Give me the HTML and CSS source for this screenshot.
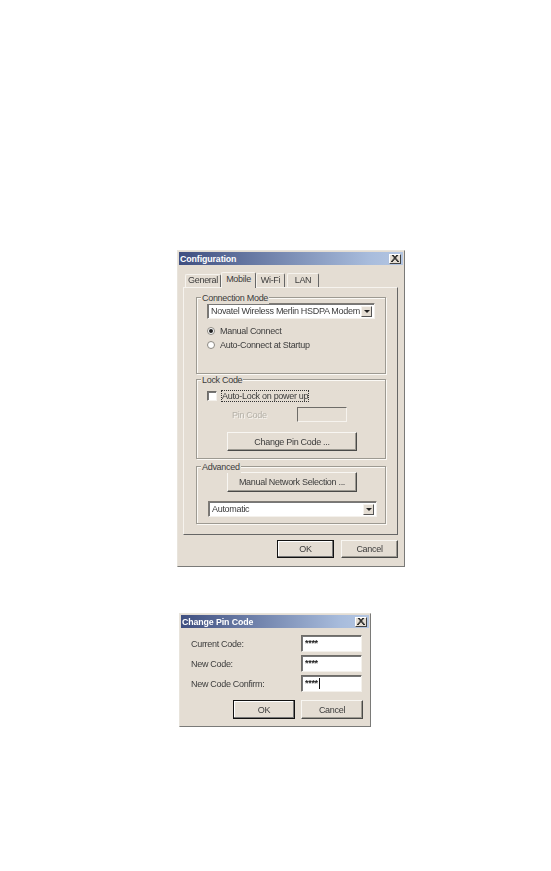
FILE: index.html
```html
<!DOCTYPE html>
<html lang="en">
<head>
<meta charset="utf-8">
<title>Configuration</title>
<link rel="stylesheet" href="styles.css">
</head>
<body>
<main class="page">
  <section class="window config">
    <header class="titlebar"><span>Configuration</span><span class="close"><svg width="8" height="7" viewBox="0 0 8 7"><path d="M1 0 L7 7 M2 0 L8 7 M7 0 L1 7 M6 0 L0 7" stroke="#222" stroke-width="1"/></svg></span></header>
    <nav class="tabs">
      <span class="tab tab-general">General</span>
      <span class="tab tab-active">Mobile</span>
      <span class="tab tab-wifi">Wi-Fi</span>
      <span class="tab tab-lan">LAN</span>
    </nav>
    <div class="panel">
      <div class="group group-conn">
        <span class="legend">Connection Mode</span>
        <div class="combo combo-modem"><span class="combo-text">Novatel Wireless Merlin HSDPA Modem</span><span class="combo-btn"><i></i></span></div>
        <div class="radio-row"><span class="radio on"></span><span>Manual Connect</span></div>
        <div class="radio-row"><span class="radio"></span><span>Auto-Connect at Startup</span></div>
      </div>
      <div class="group group-lock">
        <span class="legend">Lock Code</span>
        <div class="check-row"><span class="check"></span><span class="focus">Auto-Lock on power up</span></div>
        <div class="pin-row"><span class="disabled">Pin Code</span><span class="pin-input"></span></div>
        <div class="btn btn-wide btn-change">Change Pin Code ...</div>
      </div>
      <div class="group group-adv">
        <span class="legend">Advanced</span>
        <div class="btn btn-wide btn-network">Manual Network Selection ...</div>
        <div class="combo combo-auto"><span class="combo-text">Automatic</span><span class="combo-btn"><i></i></span></div>
      </div>
    </div>
    <footer class="actions actions-config">
      <div class="btn btn-default btn-ok">OK</div>
      <div class="btn btn-cancel">Cancel</div>
    </footer>
  </section>

  <section class="window pin">
    <header class="titlebar"><span>Change Pin Code</span><span class="close"><svg width="8" height="7" viewBox="0 0 8 7"><path d="M1 0 L7 7 M2 0 L8 7 M7 0 L1 7 M6 0 L0 7" stroke="#222" stroke-width="1"/></svg></span></header>
    <div class="fields">
      <div class="field"><span>Current Code:</span><span class="input">****</span></div>
      <div class="field"><span>New Code:</span><span class="input">****</span></div>
      <div class="field"><span>New Code Confirm:</span><span class="input">****<b class="caret"></b></span></div>
    </div>
    <footer class="actions actions-pin">
      <div class="btn btn-default btn-ok2">OK</div>
      <div class="btn btn-cancel2">Cancel</div>
    </footer>
  </section>
</main>
</body>
</html>
```
FILE: styles.css
```css
* { box-sizing: border-box; }
html, body { margin: 0; padding: 0; background: #fff; }
body { width: 551px; height: 871px; overflow: hidden; font-family: "Liberation Sans", Arial, sans-serif; font-size: 9px; letter-spacing: -0.3px; color: #3c3c3c; white-space: nowrap; }
.page { display: flex; flex-direction: column; filter: blur(0.4px); }

.window { background: #e4ddd3; border: 1px solid; border-color: #e8e4dc #7a7a78 #7a7a78 #e8e4dc; padding: 1px; }
.config { width: 228px; height: 317px; margin: 250px 0 0 177px; }
.pin { width: 192px; height: 114px; margin: 46px 0 0 179px; }

.titlebar { height: 13px; display: flex; align-items: center; justify-content: space-between; padding: 0 2px 0 1px; background: linear-gradient(90deg, #3f4f80, #a8bcdc 85%, #b4c6e2); color: #fff; font-weight: bold; font-size: 8.8px; letter-spacing: -0.1px; }
.close { width: 12px; height: 10px; background: #e4ddd3; border: 1px solid; border-color: #fff #444 #444 #fff; display: flex; align-items: center; justify-content: center; }

.tabs { display: flex; height: 17px; margin: 5px 0 0 5px; align-items: flex-end; }
.tab { border: 1px solid; border-color: #f6f3ee #666 #e4ddd3 #f6f3ee; border-bottom: 0; text-align: center; border-radius: 2px 2px 0 0; line-height: 11px; }
.tab-general { width: 36px; height: 13px; margin-left: 1px; }
.tab-active { width: 35px; height: 16px; background: #e4ddd3; margin-bottom: -1px; position: relative; z-index: 1; padding-top: 1px; }
.tab-wifi { width: 29px; height: 14px; padding-top: 1px; }
.tab-lan { width: 32px; height: 14px; margin-left: 2px; padding-top: 1px; }

.panel { width: 215px; height: 248px; margin-left: 4px; border: 1px solid; border-color: #f6f3ee #666 #666 #f6f3ee; padding: 9px 12px 0 12px; display: flex; flex-direction: column; }

.group { position: relative; border: 1px solid #9d9a92; box-shadow: 1px 1px 0 #fbf9f5, inset 1px 1px 0 #fbf9f5; width: 190px; padding: 0 0 0 10px; }
.legend { position: absolute; top: -5px; left: 4px; background: #e4ddd3; padding: 0 1px; line-height: 11px; }
.group-conn { height: 77px; padding-top: 5px; }
.group-lock { height: 80px; margin-top: 5px; padding-top: 10px; }
.group-adv { height: 58px; margin-top: 7px; padding-top: 5px; }

.combo { background: #fff; border: 1px solid; border-color: #7e7a74 #f4f1ec #f4f1ec #7e7a74; box-shadow: inset 1px 1px 0 #777; display: flex; align-items: center; justify-content: space-between; padding: 2px 2px 2px 3px; }
.combo-modem { width: 168px; height: 16px; margin-bottom: 5px; }
.combo-auto { width: 169px; height: 16px; margin: 9px 0 0 1px; }
.combo-btn { width: 11px; height: 11px; background: #e4ddd3; border: 1px solid; border-color: #f6f3ee #555 #555 #f6f3ee; display: flex; align-items: center; justify-content: center; }
.combo-btn i { width: 0; height: 0; border: 3px solid transparent; border-top: 3px solid #222; border-bottom: 0; }

.radio-row { display: flex; align-items: center; gap: 5px; height: 14px; }
.radio { width: 8px; height: 8px; border-radius: 50%; background: #fff; border: 1px solid #8a8780; display: flex; align-items: center; justify-content: center; }
.radio.on::after { content: ""; width: 4px; height: 4px; border-radius: 50%; background: #222; }

.check-row { display: flex; align-items: center; gap: 4px; }
.check { width: 10px; height: 10px; background: #fff; border: 1px solid; border-color: #6e6c68 #f4f1ec #f4f1ec #6e6c68; box-shadow: inset 1px 1px 0 #777; }
.focus { border: 1px dotted #333; line-height: 10px; }
.pin-row { display: flex; align-items: center; height: 15px; margin: 5px 0 0 25px; justify-content: space-between; width: 115px; }
.disabled { color: #b5b1a8; text-shadow: 1px 1px 0 #f6f3ee; }
.pin-input { width: 50px; height: 15px; border: 1px solid; border-color: #6e6c68 #f6f3ee #f6f3ee #6e6c68; }

.btn { display: flex; align-items: center; justify-content: center; background: #e4ddd3; border: 1px solid; border-color: #f8f6f2 #4a4a48 #4a4a48 #f8f6f2; box-shadow: inset -1px -1px 0 #9d9a92; }
.btn-wide { width: 130px; margin-left: 20px; }
.btn-change { height: 19px; margin-top: 10px; }
.btn-network { height: 20px; }

.actions { display: flex; }
.actions-config { margin: 5px 0 0 98px; gap: 7px; }
.btn-ok, .btn-cancel { width: 57px; height: 18px; }
.btn-default { border: 1px solid #111; box-shadow: inset -1px -1px 0 #777, inset 1px 1px 0 #fff; }

.fields { padding: 7px 0 0 10px; display: flex; flex-direction: column; gap: 3px; }
.field { display: flex; align-items: center; justify-content: space-between; height: 17px; width: 171px; padding-top: 1px; }
.input { width: 61px; height: 17px; margin-top: -1px; background: #fff; border: 1px solid; border-color: #6e6c68 #f4f1ec #f4f1ec #6e6c68; box-shadow: inset 1px 1px 0 #777; padding: 2px 0 0 3px; font-weight: bold; display: flex; line-height: 11px; color: #222; }
.caret { width: 1px; height: 11px; background: #111; margin-left: 1px; }
.actions-pin { margin: 8px 0 0 52px; gap: 6px; }
.btn-ok2, .btn-cancel2 { width: 62px; height: 19px; }
```
